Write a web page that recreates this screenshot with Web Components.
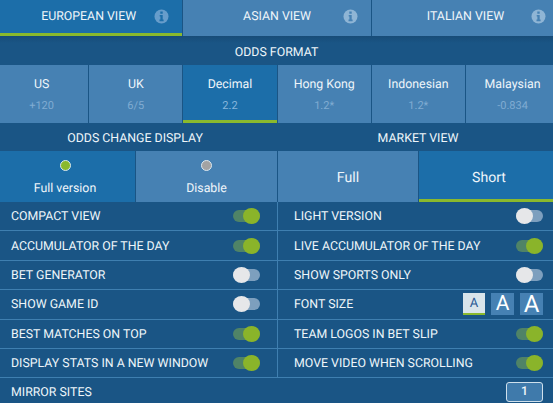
<!DOCTYPE html>
<html>
<head>
<meta charset="utf-8">
<style>
  html, body { margin: 0; padding: 0; background: #1a5585; }
  body { width: 553px; height: 403px; overflow: hidden; font-family: Roboto, "Liberation Sans", sans-serif; color: #eef5fa; text-rendering: geometricPrecision; }
</style>
</head>
<body>
<settings-panel></settings-panel>

<script>
const BLUE_ACTIVE = "#1c6ea9";
const BLUE_IDLE = "#4681b3";
const GREEN = "#8ab92d";
const LINE = "#3f7fb0";

class ViewTab extends HTMLElement {
  constructor() {
    super();
    this.attachShadow({ mode: "open" });
    const on = this.hasAttribute("active");
    this.shadowRoot.innerHTML = `
      <style>
        :host {
          display: flex;
          align-items: center;
          justify-content: center;
          position: relative;
          height: 36px;
          box-sizing: border-box;
          padding: ${on ? "1px 0 0" : "0 0 2px"};
          background: ${on ? BLUE_ACTIVE : BLUE_IDLE};
          border-bottom: ${on ? "3px solid " + GREEN : "0"};
          font-size: 12.35px;
        }
        svg { position: absolute; right: 13px; top: 9px; }
      </style>
      <slot></slot>
      <svg width="15" height="15" viewBox="0 0 15 15">
        <circle cx="7.5" cy="7.5" r="7" fill="${on ? "#679dcb" : "#8fb5d5"}"/>
        <path d="M6.3 2.6h2.4v2.1H6.3zM5.7 6h3v4.6h.9v1.6H5.5v-1.6h.9V7.6h-.7z" fill="${on ? BLUE_ACTIVE : BLUE_IDLE}"/>
      </svg>`;
  }
}
customElements.define("view-tab", ViewTab);

class OddsCell extends HTMLElement {
  constructor() {
    super();
    this.attachShadow({ mode: "open" });
    const on = this.hasAttribute("active");
    this.shadowRoot.innerHTML = `
      <style>
        :host {
          display: flex;
          flex-direction: column;
          align-items: center;
          height: 58px;
          box-sizing: border-box;
          padding-top: 12px;
          background: ${on ? BLUE_ACTIVE : BLUE_IDLE};
          border-bottom: ${on ? "3px solid " + GREEN : "0"};
          font-size: 12.35px;
        }
        .sub { margin-top: 6px; font-size: 11px; color: ${on ? "#86b6dc" : "#80acd2"}; line-height: 13px; }
        .name { line-height: 16px; }
      </style>
      <div class="name"><slot></slot></div>
      <div class="sub">${this.getAttribute("sub")}</div>`;
  }
}
customElements.define("odds-cell", OddsCell);

class ChoiceButton extends HTMLElement {
  constructor() {
    super();
    this.attachShadow({ mode: "open" });
    const on = this.hasAttribute("active");
    const dot = this.getAttribute("dot");
    const bar = this.hasAttribute("bar") && on;
    this.shadowRoot.innerHTML = `
      <style>
        :host {
          display: flex;
          flex-direction: column;
          align-items: center;
          justify-content: ${dot ? "flex-start" : "center"};
          height: 51px;
          box-sizing: border-box;
          padding-top: ${dot ? "9px" : bar ? "6px" : "3px"};
          background: ${on ? BLUE_ACTIVE : BLUE_IDLE};
          border-bottom: ${bar ? "3px solid " + GREEN : "0"};
          font-size: ${dot ? "12.35px" : "14.1px"};
        }
        .dot { width: 9px; height: 9px; border-radius: 50%; border: 1px solid #dbe8f0; margin-bottom: 10px; background: ${dot}; }
        .label { line-height: 16px; }
      </style>
      ${dot ? '<div class="dot"></div>' : ""}
      <div class="label"><slot></slot></div>`;
  }
}
customElements.define("choice-button", ChoiceButton);

class ToggleSwitch extends HTMLElement {
  constructor() {
    super();
    this.attachShadow({ mode: "open" });
    const on = this.hasAttribute("on");
    this.shadowRoot.innerHTML = `
      <style>
        :host { display: block; position: relative; width: 27px; height: 16px; flex: none; }
        .track {
          position: absolute; left: 0; right: 0; top: 2px; height: 12px; border-radius: 6px;
          background: ${on ? "#4f8367" : "#7d9fbe"};
        }
        .thumb {
          position: absolute; top: 0; ${on ? "right: 0" : "left: 0"};
          width: 17px; height: 16px; border-radius: 50%;
          background: ${on ? "#8ab42a" : "#e6e7e9"};
        }
      </style>
      <div class="track"></div>
      <div class="thumb"></div>`;
  }
}
customElements.define("toggle-switch", ToggleSwitch);

class SettingRow extends HTMLElement {
  constructor() {
    super();
    this.attachShadow({ mode: "open" });
    this.shadowRoot.innerHTML = `
      <style>
        :host {
          display: flex;
          align-items: center;
          justify-content: space-between;
          box-sizing: border-box;
          height: 29.4px;
          padding: 0 var(--row-end) 0 var(--row-start);
          border-bottom: 1px solid ${LINE};
          font-size: 12.35px;
        }
        span { padding-top: 2px; }
      </style>
      <span><slot></slot></span>
      <slot name="control"></slot>`;
  }
}
customElements.define("setting-row", SettingRow);

class FontSizes extends HTMLElement {
  constructor() {
    super();
    this.attachShadow({ mode: "open" });
    this.shadowRoot.innerHTML = `
      <style>
        :host { display: flex; gap: 6px; }
        div {
          width: 23px; height: 22px; box-sizing: border-box;
          display: flex; align-items: center; justify-content: center;
          background: ${BLUE_IDLE}; color: #fff;
        }
        .s { width: 22px; background: #d9e4ea; color: #2a5a94; font-size: 13px; border-bottom: 2px solid ${GREEN}; }
        .m { font-size: 21px; }
        .l { font-size: 24px; }
      </style>
      <div class="s">A</div><div class="m">A</div><div class="l">A</div>`;
  }
}
customElements.define("font-sizes", FontSizes);

class SettingsPanel extends HTMLElement {
  constructor() {
    super();
    this.attachShadow({ mode: "open" });
    const left = [
      ["COMPACT VIEW", true], ["ACCUMULATOR OF THE DAY", true], ["BET GENERATOR", false],
      ["SHOW GAME ID", false], ["BEST MATCHES ON TOP", true], ["DISPLAY STATS IN A NEW WINDOW", true]
    ];
    const right = [
      ["LIGHT VERSION", false], ["LIVE ACCUMULATOR OF THE DAY", true], ["SHOW SPORTS ONLY", false],
      ["FONT SIZE", null], ["TEAM LOGOS IN BET SLIP", true], ["MOVE VIDEO WHEN SCROLLING", true]
    ];
    const row = ([text, on]) => `<setting-row>${text}${on === null
      ? '<font-sizes slot="control"></font-sizes>'
      : `<toggle-switch slot="control"${on ? " on" : ""}></toggle-switch>`}</setting-row>`;
    this.shadowRoot.innerHTML = `
      <style>
        :host { display: block; width: 553px; height: 403px; background: #1a5585; overflow: hidden; }
        .tabs, .odds { display: grid; grid-template-columns: repeat(6, 93.2px); column-gap: 1px; margin: 0 -5px; }
        .tabs { grid-template-columns: repeat(3, 187.4px); }
        .title { display: flex; align-items: center; justify-content: center; box-sizing: border-box; font-size: 12.35px; }
        .format { height: 29px; padding-top: 5px; background: linear-gradient(#174c78, #1a5585 7px); }
        .titles { display: grid; grid-template-columns: 280px 280px; column-gap: 3px; height: 28px; margin: 0 -5px; }
        .titles .title { padding-top: 3px; }
        .choices { display: grid; grid-template-columns: 140px 141px 140px 140px; column-gap: 1px; margin: 0 -5px; }
        .rows { display: grid; grid-template-columns: 278px 1fr; }
        .rows > div:first-child { border-right: 1px solid ${LINE}; --row-start: 11px; --row-end: 17px; }
        .rows > div:last-child { --row-start: 16px; --row-end: 10px; }
        .mirror {
          display: flex; align-items: center; justify-content: space-between;
          height: 26px; box-sizing: border-box; padding: 1px 11px 0; font-size: 12.35px;
        }
        .mirror span { padding-top: 2px; }
        .page {
          width: 37px; height: 20px; box-sizing: border-box; margin-right: -1px;
          display: flex; align-items: center; justify-content: center;
          background: #3f7aab; border: 1px solid #cfe0ec; border-radius: 3px; font-size: 12.35px; font-weight: 500;
        }
      </style>
      <div class="tabs">
        <view-tab active>EUROPEAN VIEW</view-tab>
        <view-tab>ASIAN VIEW</view-tab>
        <view-tab>ITALIAN VIEW</view-tab>
      </div>
      <div class="title format">ODDS FORMAT</div>
      <div class="odds">
        <odds-cell sub="+120">US</odds-cell>
        <odds-cell sub="6/5">UK</odds-cell>
        <odds-cell sub="2.2" active>Decimal</odds-cell>
        <odds-cell sub="1.2*">Hong Kong</odds-cell>
        <odds-cell sub="1.2*">Indonesian</odds-cell>
        <odds-cell sub="-0.834">Malaysian</odds-cell>
      </div>
      <div class="titles">
        <div class="title">ODDS CHANGE DISPLAY</div>
        <div class="title">MARKET VIEW</div>
      </div>
      <div class="choices">
        <choice-button active dot="#8ab92d">Full version</choice-button>
        <choice-button dot="#a3a3a3">Disable</choice-button>
        <choice-button>Full</choice-button>
        <choice-button active bar>Short</choice-button>
      </div>
      <div class="rows">
        <div>${left.map(row).join("")}</div>
        <div>${right.map(row).join("")}</div>
      </div>
      <div class="mirror"><span>MIRROR SITES</span><div class="page">1</div></div>`;
  }
}
customElements.define("settings-panel", SettingsPanel);
</script>
</body>
</html>
